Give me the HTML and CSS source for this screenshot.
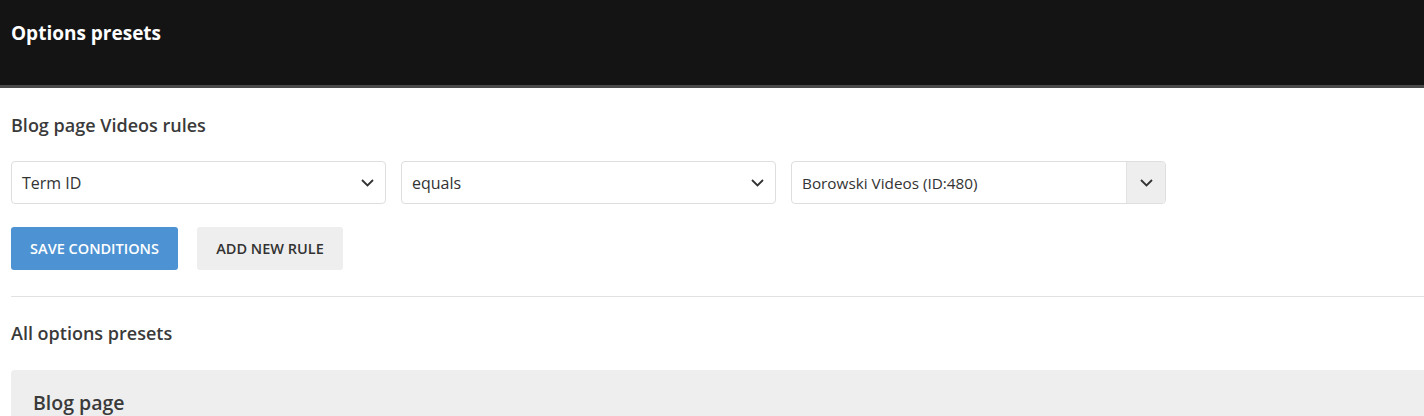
FILE: index.html
```html
<!DOCTYPE html>
<html lang="en">
<head>
<meta charset="utf-8">
<title>Options presets</title>
<link rel="stylesheet" href="styles.css">
</head>
<body>
<header class="topbar">
  <h1 class="topbar-title">Options presets</h1>
</header>
<main class="content">
  <h2 class="section-title">Blog page Videos rules</h2>
  <div class="rule-row">
    <div class="select">
      <span class="select-value">Term ID</span>
      <svg class="chev" width="13" height="8" viewBox="0 0 13 8"><path d="M1 1l5.5 5.5L12 1" fill="none" stroke="#333" stroke-width="1.8"/></svg>
    </div>
    <div class="select">
      <span class="select-value">equals</span>
      <svg class="chev" width="13" height="8" viewBox="0 0 13 8"><path d="M1 1l5.5 5.5L12 1" fill="none" stroke="#333" stroke-width="1.8"/></svg>
    </div>
    <div class="select select-addon">
      <span class="select-value small">Borowski Videos (ID:480)</span>
      <span class="addon">
        <svg width="13" height="8" viewBox="0 0 13 8"><path d="M1 1l5.5 5.5L12 1" fill="none" stroke="#333" stroke-width="1.8"/></svg>
      </span>
    </div>
  </div>
  <div class="btn-row">
    <button class="btn btn-primary">SAVE CONDITIONS</button>
    <button class="btn btn-light">ADD NEW RULE</button>
  </div>
  <hr class="divider">
  <h2 class="section-title">All options presets</h2>
  <div class="preset-box">
    <h3 class="preset-title">Blog page</h3>
  </div>
</main>
</body>
</html>
```
FILE: styles.css
```css
* { box-sizing: border-box; }
html, body { margin: 0; padding: 0; }
body {
  font-family: "Open Sans", "Noto Sans", sans-serif;
  color: #333;
  background: #fff;
  overflow: hidden;
}
.topbar {
  background: #141414;
  height: 88px;
  border-bottom: 3px solid #4a4a4a;
  padding: 20px 0 0 11px;
}
.topbar-title {
  margin: 0;
  color: #fff;
  font-size: 19px;
  line-height: 26px;
  font-weight: 700;
}
.content {
  padding: 0 0 0 11px;
}
.section-title {
  margin: 0;
  font-size: 18px;
  line-height: 24px;
  font-weight: 600;
  color: #3a3a3a;
}
.content > .section-title:first-child { margin-top: 25px; }
.rule-row {
  display: flex;
  gap: 15px;
  margin-top: 24px;
}
.select {
  width: 375px;
  height: 43px;
  border: 1px solid #dedede;
  border-radius: 4px;
  display: flex;
  align-items: center;
  justify-content: space-between;
  padding: 0 11px 0 10px;
  background: #fff;
}
.select-value {
  font-size: 16px;
  color: #333;
}
.select-value.small { font-size: 15.3px; }
.select-addon { padding-right: 0; overflow: hidden; }
.addon {
  width: 39px;
  align-self: stretch;
  background: #eee;
  border-left: 1px solid #e2e2e2;
  display: flex;
  align-items: center;
  justify-content: center;
}
.btn-row {
  display: flex;
  gap: 19px;
  margin-top: 23px;
}
.btn {
  height: 43px;
  border: none;
  border-radius: 3px;
  font-family: inherit;
  font-size: 14.5px;
  font-weight: 600;
  padding: 0;
}
.btn-primary { background: #4d93d3; color: #fff; width: 167px; }
.btn-light { background: #eee; color: #333; width: 146px; }
.divider {
  border: 0;
  border-top: 1px solid #e2e2e2;
  margin: 26px 0 0 0;
}
.divider + .section-title { margin-top: 24px; }
.preset-box {
  margin-top: 25px;
  background: #eee;
  border-radius: 4px 0 0 0;
  padding: 20px 22px 20px;
  height: 80px;
}
.preset-title {
  margin: 0;
  font-size: 19.5px;
  line-height: 26px;
  font-weight: 600;
  color: #3a3a3a;
}
```
